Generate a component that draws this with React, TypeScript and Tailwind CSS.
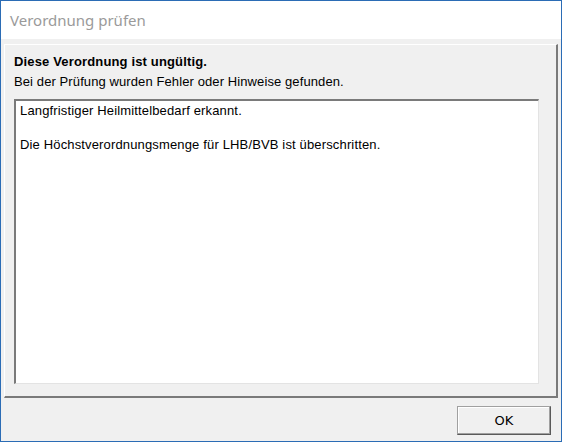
import React from "react";

export default function App() {
  return (
    <div className="w-[562px] h-[442px] flex flex-col border border-[#2b6cb5] bg-[#f0f0f0] overflow-hidden" style={{ fontFamily: '"Liberation Sans", Arial, sans-serif' }}>
      <div className="h-[38px] shrink-0 bg-white flex items-center pl-[9px]">
        <span className="text-[15px] text-[#9a9a9a]" style={{ fontFamily: '"Noto Sans", "Open Sans", sans-serif' }}>Verordnung prüfen</span>
      </div>
      <div className="flex-1 flex flex-col pt-[5px] px-[3px]">
        <div className="flex-1 flex flex-col border-t border-l border-t-white border-l-white border-r-2 border-b-2 border-r-[#7a7a7a] border-b-[#7a7a7a] pt-[8px] pl-[9px] pr-[17px] pb-[12px]">
          <div className="text-[13px] leading-[17px] font-bold text-black tracking-[0.15px]">Diese Verordnung ist ungültig.</div>
          <div className="text-[13px] leading-[17px] text-black mt-[3px] tracking-[0.1px]">Bei der Prüfung wurden Fehler oder Hinweise gefunden.</div>
          <div className="flex-1 mt-[9px] bg-white border-t-2 border-l-2 border-t-[#7a7a7a] border-l-[#7a7a7a] border-r border-b border-r-[#e3e3e3] border-b-[#e3e3e3] px-[4px] pt-[1px] tracking-[0.15px]">
            <div className="text-[13px] leading-[17px] text-black">Langfristiger Heilmittelbedarf erkannt.</div>
            <div className="text-[13px] leading-[17px] text-black">&nbsp;</div>
            <div className="text-[13px] leading-[17px] text-black">Die Höchstverordnungsmenge für LHB/BVB ist überschritten.</div>
          </div>
        </div>
        <div className="h-[43px] shrink-0 flex justify-end items-start pt-[8px] pr-[7px]">
          <button className="w-[94px] h-[29px] bg-[#f0f0f0] border border-t-[#a0a0a0] border-l-[#a0a0a0] border-r-[#5a5a5a] border-b-[#5a5a5a] shadow-[inset_-1px_-1px_0_#a0a0a0,inset_1px_1px_0_#ffffff] text-[13px] text-black flex items-center justify-center" style={{ fontFamily: '"DejaVu Sans", sans-serif' }}>
            OK
          </button>
        </div>
      </div>
    </div>
  );
}
